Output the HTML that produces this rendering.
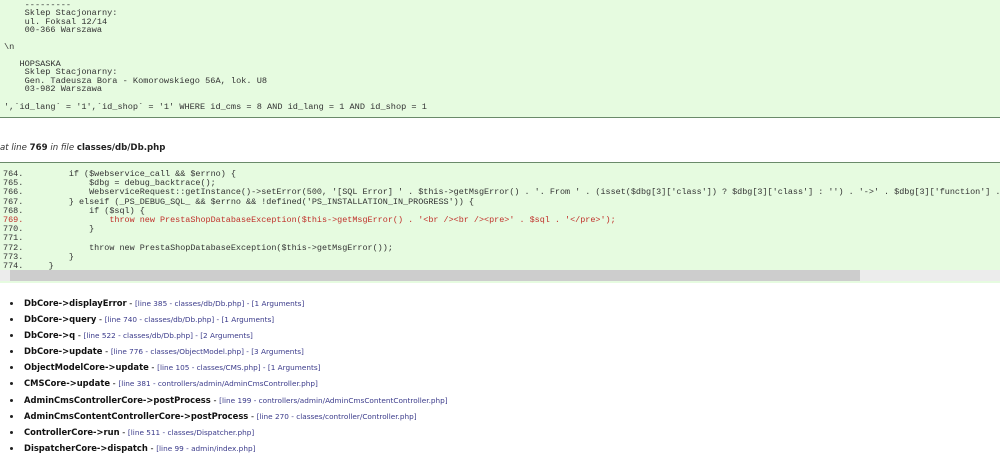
<!DOCTYPE html>
<html><head><meta charset="utf-8"><style>
body{margin:0;width:1000px;height:458px;overflow:hidden;background:#fff;font-family:"DejaVu Sans","Liberation Sans",sans-serif;position:relative}
.box1{position:absolute;left:0;top:-2px;width:1000px;height:118px;background:#e6fbe0;border-bottom:1px solid #6a8a6a;border-top:1px solid #a0b0a0}
pre{margin:0;font-family:"Liberation Mono",monospace;font-size:8.6px;color:#333;white-space:pre}
.box1 pre{position:absolute;left:4px;line-height:8.4px}
.at{position:absolute;left:0;top:143px;font-size:8.6px;color:#222}
.at i{color:#333}
.box2{position:absolute;left:0;top:162px;width:1000px;height:120px;background:#e6fbe0;border-top:1px solid #6a8a6a}
.box2 pre{position:absolute;left:3px;top:7px;line-height:9.2px;font-size:8.45px}
.red{color:#c0302a}
.sb{position:absolute;left:0;top:270px;width:1000px;height:11px;background:#ececec}
.th{position:absolute;left:10px;top:270px;width:850px;height:11px;background:#cdcdcd}
ul{position:absolute;left:0;top:297px;margin:0;padding:0;list-style:none}
li{height:16.1px;line-height:13px;font-size:8.4px;white-space:nowrap;position:relative;padding-left:24px}
li:before{content:"";position:absolute;left:10px;top:5px;width:3px;height:3px;background:#222;border-radius:50%}
li b{color:#111}
li span{color:#3a3a8a;font-size:7.3px}
</style></head><body>
<div class="box1">
<pre style="top:2px">    ---------
    Sklep Stacjonarny:
    ul. Foksal 12/14
    00-366 Warszawa</pre>
<pre style="top:44px">\n</pre>
<pre style="top:61px">   HOPSASKA
    Sklep Stacjonarny:
    Gen. Tadeusza Bora - Komorowskiego 56A, lok. U8
    03-982 Warszawa</pre>
<pre style="top:104px">',`id_lang` = '1',`id_shop` = '1' WHERE id_cms = 8 AND id_lang = 1 AND id_shop = 1</pre>
</div>
<div class="at"><i>at line</i> <b>769</b> <i>in file</i> <b>classes/db/Db.php</b></div>
<div class="box2"><pre>764.         if ($webservice_call &amp;&amp; $errno) {
765.             $dbg = debug_backtrace();
766.             WebserviceRequest::getInstance()-&gt;setError(500, '[SQL Error] ' . $this-&gt;getMsgError() . '. From ' . (isset($dbg[3]['class']) ? $dbg[3]['class'] : '') . '-&gt;' . $dbg[3]['function'] .
767.         } elseif (_PS_DEBUG_SQL_ &amp;&amp; $errno &amp;&amp; !defined('PS_INSTALLATION_IN_PROGRESS')) {
768.             if ($sql) {
<span class="red">769.                 throw new PrestaShopDatabaseException($this-&gt;getMsgError() . '&lt;br /&gt;&lt;br /&gt;&lt;pre&gt;' . $sql . '&lt;/pre&gt;');</span>
770.             }
771.
772.             throw new PrestaShopDatabaseException($this-&gt;getMsgError());
773.         }
774.     }</pre></div>
<div class="sb"></div><div class="th"></div>
<ul>
<li><b>DbCore-&gt;displayError</b> - <span>[line 385 - classes/db/Db.php] - [1 Arguments]</span></li>
<li><b>DbCore-&gt;query</b> - <span>[line 740 - classes/db/Db.php] - [1 Arguments]</span></li>
<li><b>DbCore-&gt;q</b> - <span>[line 522 - classes/db/Db.php] - [2 Arguments]</span></li>
<li><b>DbCore-&gt;update</b> - <span>[line 776 - classes/ObjectModel.php] - [3 Arguments]</span></li>
<li><b>ObjectModelCore-&gt;update</b> - <span>[line 105 - classes/CMS.php] - [1 Arguments]</span></li>
<li><b>CMSCore-&gt;update</b> - <span>[line 381 - controllers/admin/AdminCmsController.php]</span></li>
<li><b>AdminCmsControllerCore-&gt;postProcess</b> - <span>[line 199 - controllers/admin/AdminCmsContentController.php]</span></li>
<li><b>AdminCmsContentControllerCore-&gt;postProcess</b> - <span>[line 270 - classes/controller/Controller.php]</span></li>
<li><b>ControllerCore-&gt;run</b> - <span>[line 511 - classes/Dispatcher.php]</span></li>
<li><b>DispatcherCore-&gt;dispatch</b> - <span>[line 99 - admin/index.php]</span></li>
</ul>
</body></html>
